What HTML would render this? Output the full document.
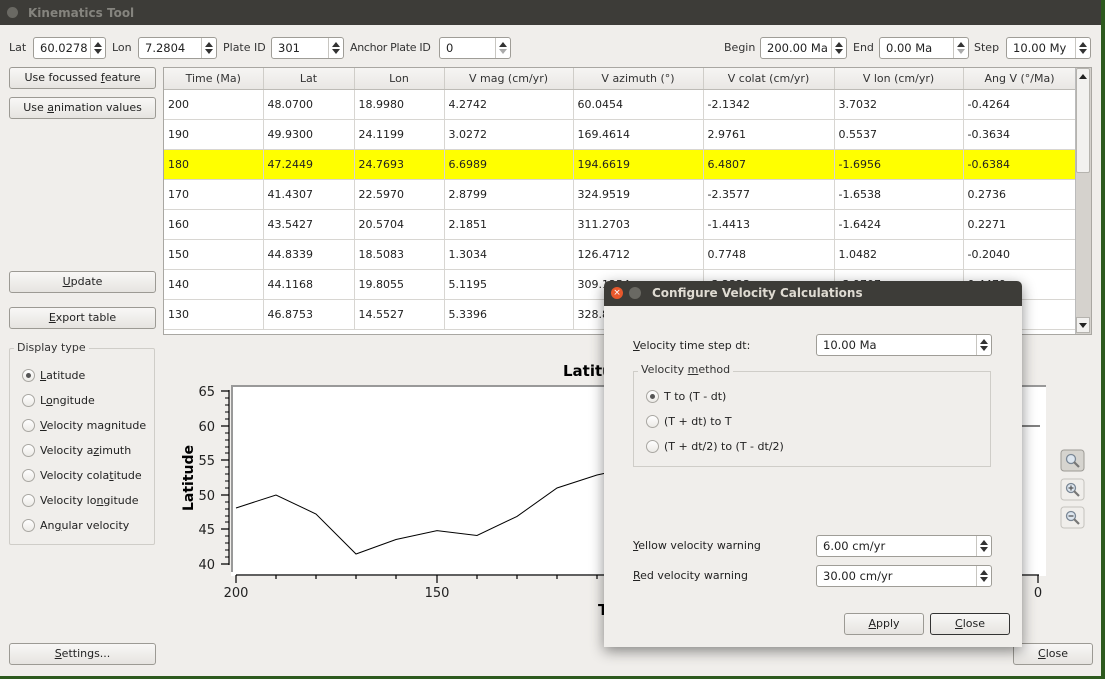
<!DOCTYPE html>
<html><head><meta charset="utf-8"><style>
*{box-sizing:border-box;margin:0;padding:0}
body{width:1105px;height:679px;overflow:hidden;background:#2d5a1e;font-family:"DejaVu Sans","Liberation Sans",sans-serif;font-size:11px;color:#3c3c3c;position:relative}
.a{position:absolute}
.win{left:0;top:0;width:1101px;height:676px;background:#f0eeeb}
.tb{left:0;top:0;width:1101px;height:25px;background:#3d3c38}
.btn{position:absolute;border:1px solid #9c9a94;border-radius:3px;background:linear-gradient(#f8f7f6,#e6e4e0);text-align:center;color:#222;line-height:19px}
.sp{position:absolute;height:22px;border:1px solid #9f9d97;border-radius:3px;background:#fff;color:#222;line-height:20px;padding-left:6px;font-size:11.5px}
.sp:after{content:"";position:absolute;right:14px;top:0;bottom:0;border-left:1px solid #c8c6c1}
.sp i{position:absolute;right:3px;width:0;height:0;border-left:4px solid transparent;border-right:4px solid transparent}
.sp .u{top:4px;border-bottom:5px solid #333}
.sp .d{bottom:4px;border-top:5px solid #333}
.lbl{position:absolute;color:#333;font-size:11px}
table{border-collapse:collapse;font-size:11px;color:#222}
td{height:30px;border-right:1px solid #d8d6d2;border-bottom:1px solid #d8d6d2;padding-left:4px;background:#fff}
th{height:21px;font-weight:normal;border-right:1px solid #cfcdc8;border-bottom:1px solid #bdbbb6;background:linear-gradient(#f6f5f3,#e9e7e4);color:#333}
tr.y td{background:#ffff00}
.rad{position:absolute;width:13px;height:13px;border:1px solid #a9a7a2;border-radius:50%;background:linear-gradient(#fff,#eceae6)}
.rad.on:after{content:"";position:absolute;left:3px;top:3px;width:5px;height:5px;border-radius:50%;background:#555}
.rt{position:absolute;color:#222;font-size:11px}
u{text-decoration:underline}
</style></head><body>
<div class="a win"></div>
<div class="a tb"></div>
<div class="a" style="left:7px;top:7px;width:11px;height:11px;border-radius:50%;background:#6a6963"></div>
<div class="a" style="left:28px;top:6px;color:#85847e;font-weight:bold;font-size:12px">Kinematics Tool</div>

<span class="lbl" style="left:9px;top:41px">Lat</span>
<div class="sp" style="left:33px;top:37px;width:73px">60.0278<i class="u"></i><i class="d"></i></div>
<span class="lbl" style="left:112px;top:41px">Lon</span>
<div class="sp" style="left:138px;top:37px;width:79px">7.2804<i class="u"></i><i class="d"></i></div>
<span class="lbl" style="left:223px;top:41px">Plate ID</span>
<div class="sp" style="left:271px;top:37px;width:73px">301<i class="u"></i><i class="d"></i></div>
<span class="lbl" style="left:350px;top:41px;letter-spacing:-0.3px">Anchor Plate ID</span>
<div class="sp" style="left:439px;top:37px;width:72px">0<i class="u"></i><i class="d" style="border-top-color:#aaa"></i></div>
<span class="lbl" style="left:724px;top:41px">Begin</span>
<div class="sp" style="left:760px;top:37px;width:87px">200.00 Ma<i class="u"></i><i class="d"></i></div>
<span class="lbl" style="left:853px;top:41px">End</span>
<div class="sp" style="left:879px;top:37px;width:90px">0.00 Ma<i class="u"></i><i class="d" style="border-top-color:#aaa"></i></div>
<span class="lbl" style="left:974px;top:41px">Step</span>
<div class="sp" style="left:1006px;top:37px;width:85px">10.00 My<i class="u"></i><i class="d"></i></div>

<div class="btn" style="left:9px;top:67px;width:147px;height:22px">Use focussed <u>f</u>eature</div>
<div class="btn" style="left:9px;top:97px;width:147px;height:22px">Use <u>a</u>nimation values</div>
<div class="btn" style="left:9px;top:271px;width:147px;height:22px"><u>U</u>pdate</div>
<div class="btn" style="left:9px;top:307px;width:147px;height:22px"><u>E</u>xport table</div>
<div class="btn" style="left:9px;top:643px;width:147px;height:22px"><u>S</u>ettings...</div>
<div class="btn" style="left:1013px;top:643px;width:80px;height:22px"><u>C</u>lose</div>

<div class="a" style="left:163px;top:67px;width:929px;height:268px;border:1px solid #a9a7a2;background:#fff;overflow:hidden">
<table style="width:912px;table-layout:fixed">
<colgroup><col style="width:99px"><col style="width:91px"><col style="width:90px"><col style="width:129px"><col style="width:130px"><col style="width:131px"><col style="width:129px"><col style="width:113px"></colgroup>
<tr><th>Time (Ma)</th><th>Lat</th><th>Lon</th><th>V mag (cm/yr)</th><th>V azimuth (°)</th><th>V colat (cm/yr)</th><th>V lon (cm/yr)</th><th>Ang V (°/Ma)</th></tr>
<tr><td>200</td><td>48.0700</td><td>18.9980</td><td>4.2742</td><td>60.0454</td><td>-2.1342</td><td>3.7032</td><td>-0.4264</td></tr>
<tr><td>190</td><td>49.9300</td><td>24.1199</td><td>3.0272</td><td>169.4614</td><td>2.9761</td><td>0.5537</td><td>-0.3634</td></tr>
<tr class="y"><td>180</td><td>47.2449</td><td>24.7693</td><td>6.6989</td><td>194.6619</td><td>6.4807</td><td>-1.6956</td><td>-0.6384</td></tr>
<tr><td>170</td><td>41.4307</td><td>22.5970</td><td>2.8799</td><td>324.9519</td><td>-2.3577</td><td>-1.6538</td><td>0.2736</td></tr>
<tr><td>160</td><td>43.5427</td><td>20.5704</td><td>2.1851</td><td>311.2703</td><td>-1.4413</td><td>-1.6424</td><td>0.2271</td></tr>
<tr><td>150</td><td>44.8339</td><td>18.5083</td><td>1.3034</td><td>126.4712</td><td>0.7748</td><td>1.0482</td><td>-0.2040</td></tr>
<tr><td>140</td><td>44.1168</td><td>19.8055</td><td>5.1195</td><td>309.1254</td><td>-3.2323</td><td>-3.9707</td><td>0.4479</td></tr>
<tr><td>130</td><td>46.8753</td><td>14.5527</td><td>5.3396</td><td>328.8</td><td>-4.5</td><td>-2.7</td><td>0.5</td></tr>
</table>
<div class="a" style="left:911px;top:0;width:16px;height:266px;background:#d5d2cd;border-left:1px solid #bbb"></div>
<div class="a" style="left:912px;top:0;width:14px;height:105px;background:#f2f1ef;border:1px solid #b5b3ae;border-radius:2px"></div>
<div class="a" style="left:915px;top:6px;border-left:4px solid transparent;border-right:4px solid transparent;border-bottom:5px solid #222"></div>
<div class="a" style="left:912px;top:249px;width:14px;height:16px;background:#f2f1ef;border:1px solid #b5b3ae"></div>
<div class="a" style="left:915px;top:255px;border-left:4px solid transparent;border-right:4px solid transparent;border-top:5px solid #222"></div>
</div>

<div class="a" style="left:9px;top:348px;width:146px;height:197px;border:1px solid #cfcdc8;border-radius:2px"></div>
<div class="a" style="left:14px;top:341px;background:#f0eeeb;padding:0 3px;color:#333;font-size:11px">Display type</div>
<div class="rad on" style="left:22px;top:369px"></div><span class="rt" style="left:40px;top:369px"><u>L</u>atitude</span>
<div class="rad" style="left:22px;top:394px"></div><span class="rt" style="left:40px;top:394px">L<u>o</u>ngitude</span>
<div class="rad" style="left:22px;top:419px"></div><span class="rt" style="left:40px;top:419px"><u>V</u>elocity magnitude</span>
<div class="rad" style="left:22px;top:444px"></div><span class="rt" style="left:40px;top:444px">Velocity a<u>z</u>imuth</span>
<div class="rad" style="left:22px;top:469px"></div><span class="rt" style="left:40px;top:469px">Velocity cola<u>t</u>itude</span>
<div class="rad" style="left:22px;top:494px"></div><span class="rt" style="left:40px;top:494px">Velocity lo<u>n</u>gitude</span>
<div class="rad" style="left:22px;top:519px"></div><span class="rt" style="left:40px;top:519px">An<u>g</u>ular velocity</span>

<svg class="a" style="left:0;top:0" width="1105" height="679">
<rect x="231" y="386" width="815" height="190" fill="#fff"/>
<line x1="231" y1="386" x2="1046" y2="386" stroke="#999" stroke-width="2"/>
<line x1="232" y1="386" x2="232" y2="572" stroke="#999" stroke-width="2"/>
<g stroke="#000" stroke-width="1.2" fill="none">
<line x1="229" y1="390" x2="229" y2="565"/>
<line x1="236" y1="575" x2="1039" y2="575"/>
<path d="M221 391h8M221 426h8M221 460h8M221 495h8M221 529h8M221 564h8"/>
<path d="M225 398h4M225 405h4M225 412h4M225 419h4M225 433h4M225 440h4M225 447h4M225 453h4M225 467h4M225 474h4M225 481h4M225 488h4M225 502h4M225 509h4M225 516h4M225 522h4M225 536h4M225 543h4M225 550h4M225 557h4" stroke-width="1"/>
<path d="M236 575v8M276 575v4M316 575v4M356 575v4M396 575v4M437 575v8M477 575v4M517 575v4M557 575v4M597 575v4M1038 575v8M998 575v4"/>
<polyline stroke-width="1" points="236,508 276,495 316,514 356,554 396,539.5 437,530.6 477,535.5 517,516.4 557,488 597,475 620,470"/>
<line x1="1020" y1="426" x2="1040" y2="426" stroke-width="1"/>
</g>
<g font-family="DejaVu Sans,Liberation Sans,sans-serif" font-size="13" fill="#222">
<text x="215" y="396" text-anchor="end">65</text><text x="215" y="431" text-anchor="end">60</text>
<text x="215" y="465" text-anchor="end">55</text><text x="215" y="500" text-anchor="end">50</text>
<text x="215" y="534" text-anchor="end">45</text><text x="215" y="569" text-anchor="end">40</text>
<text x="236" y="597" text-anchor="middle">200</text><text x="437" y="597" text-anchor="middle">150</text>
<text x="1038" y="597" text-anchor="middle">0</text>
<text x="563" y="376" font-weight="bold" font-size="15" fill="#000">Latitude vs Time</text>
<text transform="translate(193,478) rotate(-90)" text-anchor="middle" font-weight="bold" font-size="14" fill="#000">Latitude</text>
<text x="598" y="615" font-weight="bold" font-size="15" fill="#000">Time</text>
</g>
<g>
<rect x="1061" y="450" width="23" height="21" rx="3" fill="#d6d4cf" stroke="#9d9b96"/>
<rect x="1061" y="479" width="23" height="21" rx="3" fill="#f0eeeb" stroke="#c5c3be"/>
<rect x="1061" y="507" width="23" height="21" rx="3" fill="#f0eeeb" stroke="#c5c3be"/>
<g fill="#dde6ef" stroke="#7a8795" stroke-width="1.3"><circle cx="1071" cy="459" r="4.5"/><circle cx="1071" cy="488" r="4.5"/><circle cx="1071" cy="516" r="4.5"/></g>
<g stroke="#777" stroke-width="2.2"><path d="M1074 462l5 5M1074 491l5 5M1074 519l5 5"/></g>
<path d="M1068.5 488h5M1071 485.5v5M1068.5 516h5" stroke="#555" stroke-width="1.2"/>
</g>
</svg>

<div class="a" style="left:604px;top:281px;width:418px;height:366px;background:#f0eeeb;box-shadow:0 4px 14px rgba(0,0,0,.45);border-radius:5px 5px 0 0;overflow:hidden">
<div class="a" style="left:0;top:0;width:418px;height:25px;background:#3d3c38"></div>
<div class="a" style="left:7px;top:6px;width:12px;height:12px;border-radius:50%;background:#e8582c;color:#fff;font-size:9px;line-height:12px;text-align:center">×</div>
<div class="a" style="left:25px;top:6px;width:12px;height:12px;border-radius:50%;background:#6a6963"></div>
<div class="a" style="left:48px;top:5px;color:#dfdbd2;font-weight:bold;font-size:12px">Configure Velocity Calculations</div>
<span class="lbl" style="left:29px;top:58px;color:#222"><u>V</u>elocity time step dt:</span>
<div class="sp" style="left:212px;top:53px;width:176px">10.00 Ma<i class="u"></i><i class="d"></i></div>
<div class="a" style="left:29px;top:90px;width:358px;height:96px;border:1px solid #cfcdc8"></div>
<div class="a" style="left:34px;top:82px;background:#f0eeeb;padding:0 3px;color:#333">Velocity <u>m</u>ethod</div>
<div class="rad on" style="left:42px;top:109px"></div><span class="rt" style="left:60px;top:109px">T to (T - dt)</span>
<div class="rad" style="left:42px;top:134px"></div><span class="rt" style="left:60px;top:134px">(T + dt) to T</span>
<div class="rad" style="left:42px;top:159px"></div><span class="rt" style="left:60px;top:159px">(T + dt/2) to (T - dt/2)</span>
<span class="lbl" style="left:29px;top:258px;color:#222"><u>Y</u>ellow velocity warning</span>
<div class="sp" style="left:212px;top:254px;width:176px">6.00 cm/yr<i class="u"></i><i class="d"></i></div>
<span class="lbl" style="left:29px;top:288px;color:#222"><u>R</u>ed velocity warning</span>
<div class="sp" style="left:212px;top:284px;width:176px">30.00 cm/yr<i class="u"></i><i class="d"></i></div>
<div class="btn" style="left:240px;top:332px;width:80px;height:22px"><u>A</u>pply</div>
<div class="btn" style="left:326px;top:332px;width:80px;height:22px;border-color:#333"><u>C</u>lose</div>
</div>
</body></html>
